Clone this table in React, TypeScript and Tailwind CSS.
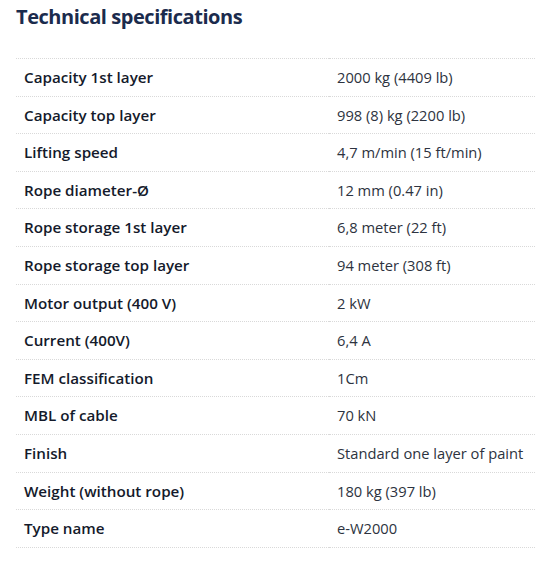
const specs: [string, string][] = [
    ["Capacity 1st layer", "2000 kg (4409 lb)"],
    ["Capacity top layer", "998 (8) kg (2200 lb)"],
    ["Lifting speed", "4,7 m/min (15 ft/min)"],
    ["Rope diameter-Ø", "12 mm (0.47 in)"],
    ["Rope storage 1st layer", "6,8 meter (22 ft)"],
    ["Rope storage top layer", "94 meter (308 ft)"],
    ["Motor output (400 V)", "2 kW"],
    ["Current (400V)", "6,4 A"],
    ["FEM classification", "1Cm"],
    ["MBL of cable", "70 kN"],
    ["Finish", "Standard one layer of paint"],
    ["Weight (without rope)", "180 kg (397 lb)"],
    ["Type name", "e-W2000"],
];

function App() {
    return (
        <div className="min-h-screen bg-white pl-4 font-['Open_Sans',sans-serif]">
            <h2 className="pt-[2px] text-[20px] font-bold leading-[30px] text-[#1b2b4d] tracking-[-0.45px]">
                Technical specifications
            </h2>
            <table className="mt-[26px] w-[519px] border-collapse text-[15px] leading-[20.6px]">
                <tbody>
                    {specs.map(([label, value]) => (
                        <tr key={label} className="border-t border-b border-dotted border-[#d9d9d9]">
                            <td className="w-[313px] whitespace-nowrap px-2 py-2 text-[15.2px] font-semibold text-[#141a2b]">
                                {label}
                            </td>
                            <td className="whitespace-nowrap px-2 py-2 text-[14.7px] text-[#2d3340]">{value}</td>
                        </tr>
                    ))}
                </tbody>
            </table>
        </div>
    );
}

export default App;
